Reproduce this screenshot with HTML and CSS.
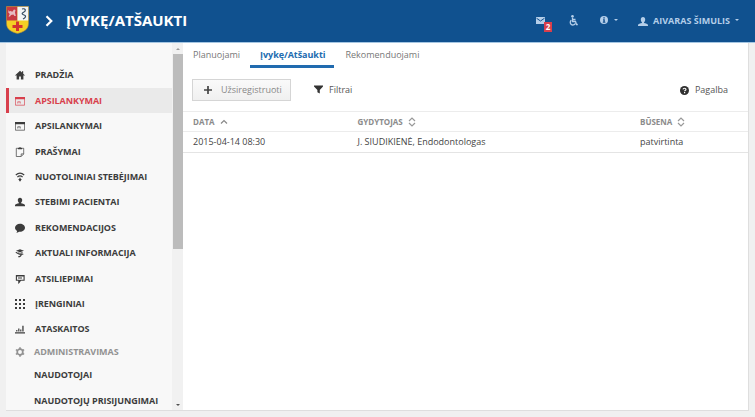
FILE: index.html
```
<!DOCTYPE html>
<html lang="lt">
<head>
<meta charset="utf-8">
<title>Įvykę/Atšaukti</title>
<link rel="stylesheet" href="styles.css">
</head>
<body>
<header class="topbar">
  <svg class="crest" viewBox="0 0 23 28">
    <path d="M.5.5h22v17c0 6-5 8.500-11 10C5.500 26 .5 23.500.5 17.500z" fill="#f4cf24"/>
    <path d="M.5.5h11v14H.5z" fill="#c63a43"/>
    <path d="M11.500.5h11v14h-11z" fill="#f3f4f5"/>
    <path d="M2.500 4l1 1.500L5 4.800 6 6l2-2.500L9.500 4 9 6.500l.8 3.500H8.500L7.300 8.500 5 9l-1 1.500H2.500L3.800 8 2.300 6.500z" fill="#e6bcc2"/>
    <path d="M16 3c4-1 4 2 2 3s-3 2 0 3 1 3-1 4" fill="none" stroke="#344b62" stroke-width="1.200"/>
    <path d="M10 15.500h3v3.500h3.500v3H13v3h-3v-3H6.500v-3H10z" fill="#d3322f"/>
    <path d="M.5.5h22v17c0 6-5 8.500-11 10C5.500 26 .5 23.500.5 17.500z" fill="none" stroke="#a9853f" stroke-width=".6"/>
  </svg>
  <svg class="chevron" viewBox="0 0 8 12"><path d="M1.500 1.200L6.300 6l-4.800 4.800" fill="none" stroke="#fff" stroke-width="2.200"/></svg>
  <h1 class="title">ĮVYKĘ/ATŠAUKTI</h1>
  <div class="mail">
    <svg class="mail-icon" viewBox="0 0 9 7"><path d="M0 0h9v7H0z" fill="#b4cee9"/><path d="M.5 1.200l4 2.800 4-2.800" fill="none" stroke="#12508f"/></svg>
    <span class="count">2</span>
  </div>
  <svg class="wheelchair" viewBox="0 0 9 11"><circle cx="3.500" cy="1.300" r="1.300" fill="#b4cee9"/><path d="M3.500 2.500v4h3l1 3h1.300M3.500 4.500h3M2.300 5.300a2.600 2.600 0 1 0 3.900 3.200" fill="none" stroke="#b4cee9" stroke-width="1.300"/></svg>
  <svg class="info" viewBox="0 0 8 8"><circle cx="4" cy="4" r="4" fill="#b4cee9"/><path d="M3.300 1.200h1.500v1.200H3.300zM3 3.200h1.800v2.600h.6v.9H2.800v-.9h.5V4H3z" fill="#12508f"/></svg>
  <i class="caret"></i>
  <svg class="user-icon" viewBox="0 0 10 9"><path d="M5 0c1.500 0 2.200 1 2.200 2.400S6.400 5 6 5.400V6c1.600.4 4 .8 4 2.200V9H0v-.8C0 6.800 2.400 6.400 4 6v-.6C3.600 5 2.800 3.800 2.800 2.400S3.500 0 5 0z" fill="#b4cee9"/></svg>
  <span class="user">AIVARAS ŠIMULIS</span>
  <i class="caret"></i>
</header>
<div class="shell">
  <nav class="sidebar">
    <a class="item"><svg viewBox="0 0 10 10"><path d="M5 .8L.2 5.200l.6.600.8-.6V9.500h2.500V6.500h1.800v3h2.500V5.200l.8.600.6-.6L8.200 3.700V1.200H7v1.400z" fill="currentColor"/></svg><span class="label">PRADŽIA</span></a>
    <a class="item active"><svg viewBox="0 0 10 10"><path d="M.4 1.500h9.200v7.700H.4z" fill="none" stroke="currentColor" stroke-width=".7"/><path d="M0 1h10v2.300H0zM2.500 5.500h3v.8h-3zM2.500 5.500h.7v2h-.7zM4.800 5.500h.7v2h-.7z" fill="currentColor"/></svg><span class="label">APSILANKYMAI</span></a>
    <a class="item"><svg viewBox="0 0 10 10"><path d="M.4 1.500h9.200v7.700H.4z" fill="none" stroke="currentColor" stroke-width=".7"/><path d="M0 1h10v2.300H0zM2.500 5.500h3v.8h-3zM2.500 5.500h.7v2h-.7zM4.800 5.500h.7v2h-.7z" fill="currentColor"/></svg><span class="label">APSILANKYMAI</span></a>
    <a class="item"><svg viewBox="0 0 10 10"><path d="M3 1.300H1.300v8.200h4.900L8.700 7V1.300H7M8.500 6.900H6.200v2.400" fill="none" stroke="currentColor" stroke-width=".7"/><path d="M3 .8h1L5 0l1 .8h1v1.500H3z" fill="currentColor"/></svg><span class="label">PRAŠYMAI</span></a>
    <a class="item"><svg viewBox="0 0 10 10"><path d="M.8 3q4.200-3.600 8.400 0M2.400 5q2.600-2.200 5.200 0M5 5.800v2.500" fill="none" stroke="currentColor" stroke-width="1.200"/><path d="M3.200 7h3.600L5 9.800z" fill="currentColor"/></svg><span class="label">NUOTOLINIAI STEBĖJIMAI</span></a>
    <a class="item"><svg viewBox="0 0 10 10"><path d="M5 .8c1.500 0 2.200 1 2.200 2.300S6.500 5.300 6.100 5.700v.5c1.500.4 3.900.7 3.900 2.100V9.200H0v-.9c0-1.400 2.400-1.700 3.900-2.100v-.5C3.500 5.300 2.800 4.400 2.800 3.100S3.500.8 5 .8z" fill="currentColor"/></svg><span class="label">STEBIMI PACIENTAI</span></a>
    <a class="item"><svg viewBox="0 0 10 10"><path d="M5 .8c2.800 0 5 1.700 5 4s-2.200 4-5 4l-.9-.1C3.200 9.500 2.200 9.800 1.300 9.800c.5-.5.8-1.100.8-1.800C.8 7.300 0 6.100 0 4.800c0-2.300 2.200-4 5-4z" fill="currentColor"/></svg><span class="label">REKOMENDACIJOS</span></a>
    <a class="item"><svg viewBox="0 0 10 10"><path d="M1 2.800L5 1.300l4 1.500-4 1.500zM3.300 4.300L5 5l2.500-1v1.500H3.300z" fill="currentColor"/><path d="M.8 4.300l3.500 1.900h4M6.200 6.200c0 2-1 2.600-3 2.600" fill="none" stroke="currentColor" stroke-width="1.100"/></svg><span class="label">AKTUALI INFORMACIJA</span></a>
    <a class="item"><svg viewBox="0 0 10 10"><path d="M1.400 1.500h7.700v4.800H5.500L4 8.500V6.300H1.400z" fill="none" stroke="currentColor" stroke-width="1.100"/><path d="M1 1h8v1.500H1zM3 3.500h4v.9H3zM3.500 6.300h2.700L3.500 9.500z" fill="currentColor"/></svg><span class="label">ATSILIEPIMAI</span></a>
    <a class="item"><svg viewBox="0 0 10 10"><path d="M0 0h2v2H0zM4 0h2v2H4zM8 0h2v2H8zM0 4h2v2H0zM4 4h2v2H4zM8 4h2v2H8zM0 8h2v2H0zM4 8h2v2H4zM8 8h2v2H8z" fill="currentColor"/></svg><span class="label">ĮRENGINIAI</span></a>
    <a class="item"><svg viewBox="0 0 10 10"><path d="M0 8.300h10v1.200H0zM1.200 6h1.200v1.500H1.200zM3.200 4.500h1.200v3H3.200zM5.200 5.500h1.200v2H5.200zM7.300 1.800h1.300v5.700H7.300z" fill="currentColor"/></svg><span class="label">ATASKAITOS</span></a>
    <a class="item group"><svg viewBox="0 0 10 10"><circle cx="5" cy="5" r="2.800" fill="none" stroke="currentColor" stroke-width="1.700"/><path d="M4.200.3h1.600v2H4.200zM4.200 7.700h1.600v2H4.200zM.5 3.300l.8-1.400L3 2.900l-.8 1.400zM9.500 3.300l-.8-1.400L7 2.900l.8 1.400zM.5 6.700l.8 1.400L3 7.100l-.8-1.400zM9.500 6.700l-.8 1.400L7 7.100l.8-1.400z" fill="currentColor"/></svg><span class="label">ADMINISTRAVIMAS</span></a>
    <a class="item sub"><span class="label">NAUDOTOJAI</span></a>
    <a class="item sub"><span class="label">NAUDOTOJŲ PRISIJUNGIMAI</span></a>
  </nav>
  <div class="scrollbar"><i class="up"></i><div class="thumb"></div><i class="down"></i></div>
  <main class="content">
    <div class="tabs">
      <a class="tab">Planuojami</a>
      <a class="tab current">Įvykę/Atšaukti</a>
      <a class="tab">Rekomenduojami</a>
    </div>
    <div class="tools">
      <a class="button"><svg class="plus" viewBox="0 0 8 8"><path d="M4 0v8M0 4h8" stroke="#444" stroke-width="1.700"/></svg><span>Užsiregistruoti</span></a>
      <a class="filter"><svg viewBox="0 0 9 9"><path d="M0 .5h9v1L5.800 5v3.500L3.400 7.300V5L0 1.500z" fill="#333"/></svg><span>Filtrai</span></a>
      <a class="help"><svg viewBox="0 0 9 9"><circle cx="4.500" cy="4.500" r="4.500" fill="#303030"/><path d="M3 3.400q.1-1.200 1.500-1.200T6 3.300q0 .7-.8 1.100-.6.300-.6.900" fill="none" stroke="#fff" stroke-width="1.100"/><path d="M4 6.100h1.200v1.100H4z" fill="#fff"/></svg><span>Pagalba</span></a>
    </div>
    <div class="row head">
      <span class="cell">DATA<svg class="asc" viewBox="0 0 8 10"><path d="M1 6.500l3-3 3 3" fill="none" stroke="#888" stroke-width="1.200"/></svg></span>
      <span class="cell">GYDYTOJAS<svg class="sort" viewBox="0 0 8 10"><path d="M1 4l3-3 3 3M1 6l3 3 3-3" fill="none" stroke="#999" stroke-width="1.200"/></svg></span>
      <span class="cell">BŪSENA<svg class="sort" viewBox="0 0 8 10"><path d="M1 4l3-3 3 3M1 6l3 3 3-3" fill="none" stroke="#999" stroke-width="1.200"/></svg></span>
    </div>
    <div class="row data">
      <span class="cell">2015-04-14 08:30</span>
      <span class="cell">J. SIUDIKIENĖ, Endodontologas</span>
      <span class="cell">patvirtinta</span>
    </div>
  </main>
</div>
</body>
</html>
```
FILE: styles.css
```
* { box-sizing: border-box; }
body {
  margin: 0;
  height: 417px;
  overflow: hidden;
  background: #f0f0f0;
  color: #444;
  font: 9px/12px "Open Sans", sans-serif;
}
svg { display: block; flex: none; }
.topbar {
  display: flex;
  align-items: center;
  height: 43px;
  padding: 0 16px 2px 6px;
  background: #10518f;
  border-bottom: 1px solid #a5c6e2;
  color: #b4cee9;
}
.crest { width: 23px; height: 28px; }
.chevron { width: 8px; height: 12px; margin: 2px 0 0 16px; }
.title {
  margin: 0 auto 0 13px;
  color: #fff;
  font-size: 15px;
  line-height: 20px;
  font-weight: 700;
  white-space: nowrap;
}
.mail { position: relative; width: 9px; margin-right: 24px; }
.mail-icon { width: 9px; height: 7px; }
.count {
  position: absolute;
  left: 8px;
  top: 5px;
  width: 8px;
  height: 10px;
  background: #d83f4c;
  color: #fff;
  font-size: 8px;
  line-height: 10px;
  font-weight: 700;
  text-align: center;
}
.wheelchair { width: 9px; height: 11px; margin-right: 22px; }
.info { width: 8px; height: 8px; margin-right: 6px; }
.caret { border: 2px solid transparent; border-top-color: #b4cee9; border-bottom: 0; }
.user-icon { width: 10px; height: 9px; margin: 2px 5px 0 20px; }
.user { margin: 2px 5px 0 0; font-weight: 700; }
.shell {
  display: flex;
  width: 743px;
  height: 368px;
  margin-left: 6px;
  background: #fff;
  border-right: 1px solid #dedede;
  border-bottom: 1px solid #dedede;
}
.sidebar { width: 166px; padding-top: 19.7px; background: #f8f8f8; overflow: hidden; }
.item {
  display: flex;
  align-items: center;
  height: 25.4px;
  padding-left: 9px;
  color: #3c3c3c;
  font-weight: 700;
  letter-spacing: -.06px;
  white-space: nowrap;
}
.item svg { width: 10px; height: 10px; margin-right: 10px; }
.active { padding-left: 6px; border-left: 3px solid #d83f4c; background: #eaeaea; color: #d83f4c; }
.group { height: 20.5px; padding-left: 9px; color: #929292; }
.group svg { margin-right: 9px; }
.sub { padding-left: 28px; }
.scrollbar {
  display: flex;
  flex-direction: column;
  align-items: center;
  width: 11px;
  padding: 5px 0 4px;
  background: #f1f1f1;
}
.up { border: 2.5px solid transparent; border-bottom-color: #999; border-top: 0; }
.down { margin-top: auto; border: 2.5px solid transparent; border-top-color: #505050; border-bottom: 0; }
.thumb { width: 10px; height: 195px; margin-top: 4px; background: #bcbcbc; }
.content { flex: 1; }
.tabs { display: flex; height: 25px; gap: 1px; }
.tab { padding: 6px 9px 0 10px; color: #777; }
.current { border-bottom: 3px solid #216baf; color: #216baf; font-weight: 700; letter-spacing: -.04px; }
.tools { display: flex; align-items: center; height: 43px; padding: 0 20px 0 9px; }
.button {
  display: flex;
  align-items: center;
  width: 99px;
  height: 22px;
  padding-left: 11px;
  border: 1px solid #d5d5d5;
  background: linear-gradient(#fafafa, #f0f0f0);
  color: #888;
}
.plus { width: 8px; height: 8px; margin-right: 9px; }
.filter, .help { display: flex; align-items: center; gap: 6px; color: #555; }
.filter svg, .help svg { width: 9px; height: 9px; }
.filter { margin-left: 23px; }
.help svg { margin-top: 1px; }
.help { margin-left: auto; }
.row {
  display: grid;
  grid-template-columns: 164.5px 282.5px 1fr;
  align-items: center;
  height: 20px;
  padding-left: 10px;
  border-top: 1px solid #ececec;
}
.data { height: 22px; border-bottom: 1px solid #e4e4e4; }
.cell { display: flex; align-items: center; }
.head { color: #8b8b8b; font-size: 8px; font-weight: 700; }
.asc, .sort { width: 8px; height: 10px; margin-left: 5px; }
```
